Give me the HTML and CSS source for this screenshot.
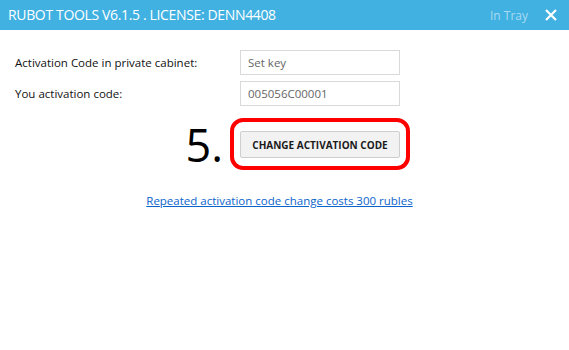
FILE: index.html
```html
<!DOCTYPE html>
<html>
<head>
  <meta charset="UTF-8">
  <title>Rubot Tools</title>
  <link rel="stylesheet" href="styles.css">
</head>
<body>
  <div class="window">
    <div class="title-bar">
      <div class="title">RUBOT TOOLS V6.1.5 . LICENSE: DENN4408</div>
      <button class="tray-button">In Tray</button>
      <button class="close-button" aria-label="Close">
        <svg width="12" height="12" viewBox="0 0 12 12">
          <path d="M1 1 L11 11 M11 1 L1 11" stroke="#ffffff" stroke-width="2.2" fill="none"/>
        </svg>
      </button>
    </div>
    <div class="content">
      <div class="form-grid">
        <label class="field-label" for="cabinetCode">Activation Code in private cabinet:</label>
        <input class="field-input" type="text" id="cabinetCode" placeholder="Set key">
        <label class="field-label" for="yourCode">You activation code:</label>
        <input class="field-input" type="text" id="yourCode" value="005056C00001">
        <div class="step-number">5.</div>
        <div class="button-cell">
          <button class="change-button">CHANGE ACTIVATION CODE</button>
        </div>
      </div>
      <div class="note">
        <a href="#" class="note-link">Repeated activation code change costs 300 rubles</a>
      </div>
    </div>
  </div>
</body>
</html>
```

FILE: styles.css
```css
html, body {
  margin: 0;
  padding: 0;
  background: #fff;
}
body {
  width: 569px;
  height: 350px;
  overflow: hidden;
  font-family: "Open Sans", "Noto Sans", sans-serif;
}
.window {
  display: flex;
  flex-direction: column;
}
.title-bar {
  display: flex;
  align-items: center;
  height: 30px;
  background: #41b1e1;
  padding: 0 0 0 8px;
}
.title {
  flex: 1;
  color: #fff;
  font-size: 14px;
  letter-spacing: -0.35px;
  line-height: 30px;
}
.tray-button {
  background: none;
  border: none;
  color: #a9dbf2;
  font-family: inherit;
  font-size: 12px;
  padding: 0;
  margin-right: 17px;
  cursor: pointer;
}
.close-button {
  background: none;
  border: none;
  padding: 0;
  width: 12px;
  height: 12px;
  margin-right: 12px;
  display: flex;
  cursor: pointer;
}
.content {
  padding: 20px 0 0 15px;
}
.form-grid {
  display: grid;
  grid-template-columns: 225px 160px;
  grid-template-rows: 25px 25px 46px;
  row-gap: 6px;
  align-items: center;
}
.field-label {
  font-size: 11.5px;
  color: #111;
}
.field-input {
  box-sizing: border-box;
  width: 160px;
  height: 25px;
  border: 1px solid #d9d9d9;
  padding: 0 7px;
  font-family: inherit;
  font-size: 11.5px;
  color: #666;
  outline: none;
}
.field-input::placeholder {
  color: #666;
}
.step-number {
  align-self: end;
  justify-self: end;
  margin-right: 17px;
  font-size: 45px;
  line-height: 27px;
  color: #000;
}
.button-cell {
  align-self: end;
  position: relative;
  height: 27px;
}
/* red annotation ring over the button */
.button-cell::before {
  content: "";
  position: absolute;
  left: -10px;
  top: -13px;
  right: -10px;
  bottom: -12px;
  border: 4px solid #f00;
  border-radius: 13px;
  box-sizing: border-box;
}
.change-button {
  box-sizing: border-box;
  width: 160px;
  height: 27px;
  background: #f2f2f2;
  border: 1px solid #cfcfcf;
  border-radius: 2px;
  font-family: inherit;
  font-size: 10px;
  font-weight: bold;
  color: #1a1a1a;
  cursor: pointer;
}
.note {
  margin-top: 30px;
  width: 529px;
  text-align: center;
}
.note-link {
  font-size: 11.5px;
  color: #0b64cc;
  text-decoration: underline;
}
```
